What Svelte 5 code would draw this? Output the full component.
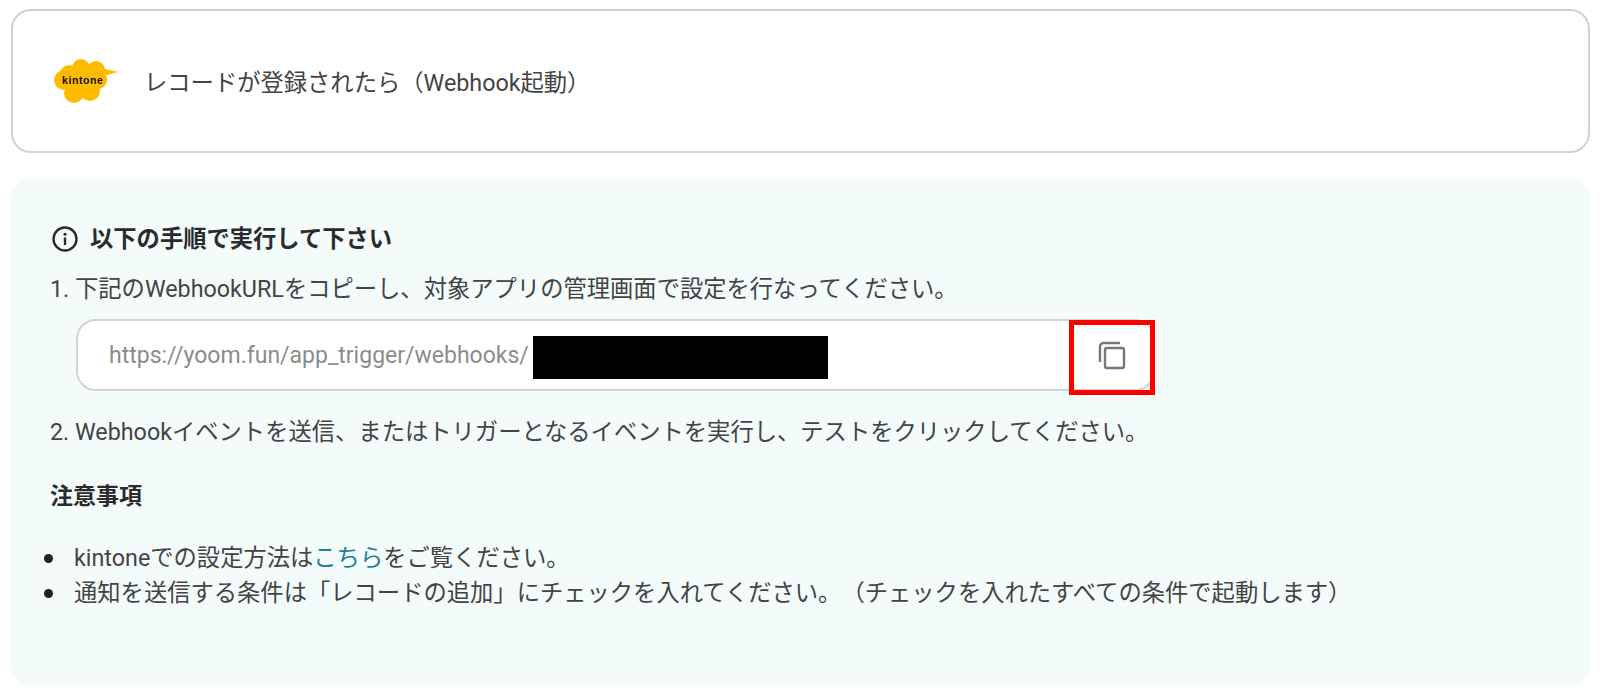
<script>
  const steps2 = "2. Webhookイベントを送信、またはトリガーとなるイベントを実行し、テストをクリックしてください。";
</script>

<div class="page">
  <section class="trigger">
    <svg class="logo" viewBox="0 0 64 44" aria-hidden="true">
      <g fill="#ffbb00">
        <circle cx="27" cy="9" r="9"/>
        <circle cx="42" cy="11" r="9"/>
        <circle cx="15" cy="15" r="9"/>
        <circle cx="10" cy="21" r="10"/>
        <circle cx="20" cy="34" r="10"/>
        <circle cx="36" cy="32" r="10"/>
        <circle cx="44" cy="21" r="9"/>
        <circle cx="28" cy="22" r="14"/>
        <path d="M44 8 64 13 46 18z"/>
      </g>
    </svg>
    <span class="logo-text">kintone</span>
    <span class="trigger-label">レコードが登録されたら（Webhook起動）</span>
  </section>

  <section class="panel">
    <h2 class="title">
      <svg class="info" viewBox="0 0 24 24" aria-hidden="true">
        <circle cx="12" cy="12" r="10.600" fill="none" stroke="#2b2b2b" stroke-width="2.200"/>
        <rect x="10.900" y="10.600" width="2.200" height="7" fill="#2b2b2b"/>
        <circle cx="12" cy="7.600" r="1.400" fill="#2b2b2b"/>
      </svg>
      以下の手順で実行して下さい
    </h2>
    <p class="step">1. 下記のWebhookURLをコピーし、対象アプリの管理画面で設定を行なってください。</p>
    <div class="field">
      <span class="url">https://yoom.fun/app_trigger/webhooks/</span>
      <span class="redact"></span>
      <span class="copy">
        <svg class="copy-icon" viewBox="0 0 30 30" width="30" height="30" aria-hidden="true">
          <path fill="none" stroke="#777" stroke-width="2.400" d="M3 22V6.500A3.500 3.500 0 0 1 6.500 3H23"/>
          <rect x="8" y="8" width="19" height="20" rx="2" fill="none" stroke="#777" stroke-width="2.400"/>
        </svg>
      </span>
    </div>
    <p class="step second">{steps2}</p>
    <h3 class="notes">注意事項</h3>
    <ul>
      <li>kintoneでの設定方法は<a href="#top">こちら</a>をご覧ください。</li>
      <li>通知を送信する条件は「レコードの追加」にチェックを入れてください。（チェックを入れたすべての条件で起動します）</li>
    </ul>
  </section>
</div>

<style>
  :global(body) {
    margin: 0;
    background: #fff;
  }
  .page {
    height: 698px;
    box-sizing: border-box;
    padding: 9px 10px 13px 11px;
    display: flex;
    flex-direction: column;
    gap: 26px;
    font-family: Roboto, "Noto Sans CJK JP", sans-serif;
    font-size: 23.300px;
    font-weight: 400;
    color: #444;
    overflow: hidden;
    text-spacing-trim: space-all;
  }
  .trigger {
    height: 144px;
    box-sizing: border-box;
    border: 2px solid #d2d2d2;
    border-radius: 20px;
    display: flex;
    align-items: center;
    padding-left: 41px;
    position: relative;
  }
  .logo {
    width: 64px;
    height: 44px;
    flex: none;
  }
  .logo-text {
    position: absolute;
    left: 49px;
    top: 63px;
    font-family: "Liberation Sans", sans-serif;
    font-size: 10.500px;
    font-weight: 700;
    letter-spacing: 0.600px;
    color: #111;
    line-height: 12px;
  }
  .trigger-label {
    margin-left: 26px;
    margin-top: -1px;
  }
  .panel {
    flex: 1;
    background: #f3fbfb;
    border-radius: 20px;
    padding: 44px 40px 0 39px;
    display: flex;
    flex-direction: column;
    align-items: flex-start;
  }
  .title {
    margin: 0;
    display: flex;
    align-items: center;
    gap: 12px;
    font-size: 23.300px;
    font-weight: 700;
    color: #2b2b2b;
    line-height: 32px;
    padding-left: 2px;
  }
  .info {
    width: 26px;
    height: 26px;
  }
  .step {
    margin: 18px 0 0;
    line-height: 32px;
  }
  .field {
    margin: 14px 0 0 26px;
    width: 1079px;
    height: 72px;
    box-sizing: border-box;
    border: 2px solid #d3d3d3;
    border-radius: 20px;
    background: #fff;
    display: flex;
    align-items: center;
    padding-left: 31px;
    position: relative;
    overflow: visible;
  }
  .url {
    color: #8c8c8c;
    font-size: 23px;
    white-space: nowrap;
  }
  .redact {
    position: absolute;
    left: 455px;
    top: 15px;
    width: 295px;
    height: 43px;
    background: #000;
  }
  .copy {
    position: absolute;
    right: -2px;
    top: -1px;
    width: 86px;
    height: 75px;
    box-sizing: border-box;
    border: 5px solid #ff0000;
    display: flex;
    align-items: center;
    justify-content: center;
  }
  .copy-icon {
    margin-bottom: 6px;
  }
  .step.second {
    margin-top: 25px;
  }
  .notes {
    margin: 33px 0 0;
    font-size: 23px;
    font-weight: 700;
    color: #2b2b2b;
    line-height: 32px;
  }
  ul {
    margin: 28px 0 0;
    padding: 0 0 0 24px;
    list-style: none;
    line-height: 35px;
  }
  li {
    position: relative;
  }
  li::before {
    content: "";
    position: absolute;
    left: -30px;
    top: 13px;
    width: 9px;
    height: 9px;
    border-radius: 50%;
    background: #222;
  }
  a {
    color: #1f7f95;
    text-decoration: none;
  }
</style>
